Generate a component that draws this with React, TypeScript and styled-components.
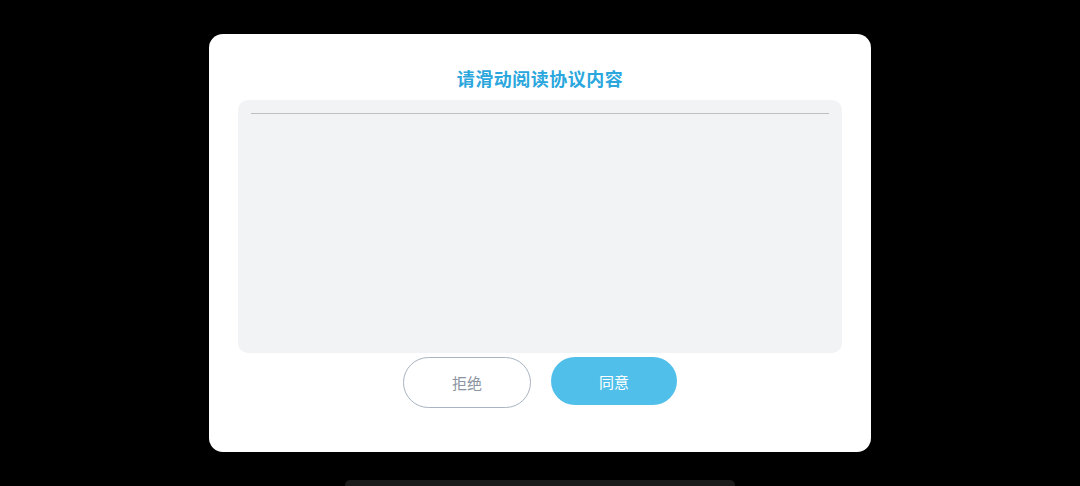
import React from "react";
import styled, { createGlobalStyle } from "styled-components";

const GlobalStyle = createGlobalStyle`
  html, body {
    margin: 0;
    padding: 0;
    background: #000;
    font-family: "Noto Sans CJK SC", "Noto Sans", sans-serif;
  }
`;

const Screen = styled.div`
  width: 1080px;
  height: 486px;
  overflow: hidden;
  background: #000;
  display: flex;
  flex-direction: column;
  align-items: center;
`;

const Dialog = styled.section`
  flex-shrink: 0;
  margin-top: 34px;
  width: 662px;
  height: 418px;
  box-sizing: border-box;
  padding: 0 29px;
  background: #fff;
  border-radius: 14px;
  display: flex;
  flex-direction: column;
`;

const Title = styled.h2`
  margin: 32px 0 10px;
  height: 24px;
  line-height: 24px;
  text-align: center;
  font-size: 18px;
  font-weight: 700;
  color: #2ba7dd;
  letter-spacing: 0.5px;
`;

const AgreementBox = styled.div`
  flex-shrink: 0;
  height: 253px;
  box-sizing: border-box;
  padding: 13px 13px 0;
  background: #f2f3f5;
  border-radius: 10px;
`;

const Divider = styled.div`
  height: 1px;
  background: #bdbfc3;
`;

const Actions = styled.div`
  margin-top: 4px;
  display: flex;
  justify-content: center;
  align-items: flex-start;
  gap: 20px;
`;

const Button = styled.button<{ $primary?: boolean }>`
  width: ${(p) => (p.$primary ? "126px" : "128px")};
  height: ${(p) => (p.$primary ? "48px" : "51px")};
  border-radius: 26px;
  box-sizing: border-box;
  border: ${(p) => (p.$primary ? "none" : "1px solid #a9b3c1")};
  background: ${(p) => (p.$primary ? "#50bfea" : "#fff")};
  color: ${(p) => (p.$primary ? "#fff" : "#8a93a1")};
  font-family: inherit;
  font-size: 15px;
  cursor: pointer;
`;

const HomeBar = styled.div`
  flex-shrink: 0;
  margin-top: 28px;
  width: 390px;
  height: 10px;
  border-radius: 5px;
  background: #1b1b1b;
`;

export default function App() {
  return (
    <>
      <GlobalStyle />
      <Screen>
        <Dialog>
          <Title>请滑动阅读协议内容</Title>
          <AgreementBox>
            <Divider />
          </AgreementBox>
          <Actions>
            <Button>拒绝</Button>
            <Button $primary>同意</Button>
          </Actions>
        </Dialog>
        <HomeBar />
      </Screen>
    </>
  );
}
